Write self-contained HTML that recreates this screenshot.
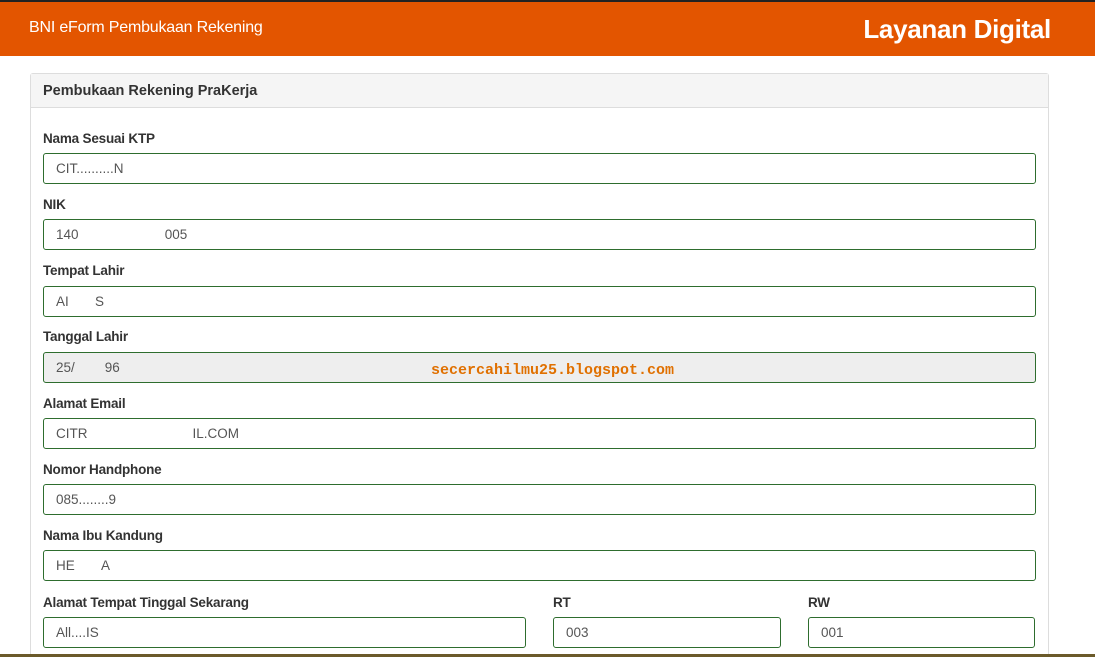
<!DOCTYPE html>
<html><head><style>
html,body{margin:0;width:1095px;height:657px;overflow:hidden}
body{background:#fff;font-family:"Liberation Sans",Arial,sans-serif;position:relative}
.hd{position:absolute;left:0;top:0;width:1095px;height:56px;background:#e35500;border-top:2px solid #222;box-sizing:border-box}
.t1{position:absolute;left:29px;top:17px;color:#fff;font-size:16px;letter-spacing:-0.2px}
.t2{position:absolute;right:44px;top:12px;color:#fff;font-size:26px;font-weight:bold;letter-spacing:-0.3px}
.pn{position:absolute;left:30px;top:73px;width:1019px;height:584px;border:1px solid #ddd;border-bottom:none;border-radius:3px;box-sizing:border-box}
.ph{height:34px;background:#f5f5f5;border-bottom:1px solid #ddd;font-weight:bold;font-size:14.5px;color:#333;padding:9px 12px;box-sizing:border-box}
.l{position:absolute;font-weight:bold;font-size:13.5px;color:#333;letter-spacing:-0.2px}
.i{position:absolute;height:31px;border:1px solid #2e6d2e;border-radius:3px;box-sizing:border-box;font-size:13.5px;color:#555;padding:7px 12px}
.wm{position:absolute;left:431px;top:362px;color:#e07000;font-family:"Liberation Mono",monospace;font-weight:bold;font-size:15px}
.bt{position:absolute;left:0;top:654px;width:1095px;height:3px;background:#6b5a2a}
</style></head><body>
<div class="hd"><div class="t1">BNI eForm Pembukaan Rekening</div><div class="t2">Layanan Digital</div></div>
<div class="pn"><div class="ph">Pembukaan Rekening PraKerja</div></div>
<div class="l" style="left:43px;top:131px">Nama Sesuai KTP</div>
<div class="i" style="left:43px;top:153px;width:993px">CIT..........N</div>
<div class="l" style="left:43px;top:197px">NIK</div>
<div class="i" style="left:43px;top:219px;width:993px">140&nbsp;&nbsp;&nbsp;&nbsp;&nbsp;&nbsp;&nbsp;&nbsp;&nbsp;&nbsp;&nbsp;&nbsp;&nbsp;&nbsp;&nbsp;&nbsp;&nbsp;&nbsp;&nbsp;&nbsp;&nbsp;&nbsp;&nbsp;005</div>
<div class="l" style="left:43px;top:263px">Tempat Lahir</div>
<div class="i" style="left:43px;top:286px;width:993px">AI&nbsp;&nbsp;&nbsp;&nbsp;&nbsp;&nbsp;&nbsp;S</div>
<div class="l" style="left:43px;top:329px">Tanggal Lahir</div>
<div class="i" style="left:43px;top:352px;width:993px;background:#eee">25/&nbsp;&nbsp;&nbsp;&nbsp;&nbsp;&nbsp;&nbsp;&nbsp;96</div>
<div class="wm">secercahilmu25.blogspot.com</div>
<div class="l" style="left:43px;top:396px">Alamat Email</div>
<div class="i" style="left:43px;top:418px;width:993px">CITR&nbsp;&nbsp;&nbsp;&nbsp;&nbsp;&nbsp;&nbsp;&nbsp;&nbsp;&nbsp;&nbsp;&nbsp;&nbsp;&nbsp;&nbsp;&nbsp;&nbsp;&nbsp;&nbsp;&nbsp;&nbsp;&nbsp;&nbsp;&nbsp;&nbsp;&nbsp;&nbsp;&nbsp;IL.COM</div>
<div class="l" style="left:43px;top:462px">Nomor Handphone</div>
<div class="i" style="left:43px;top:484px;width:993px">085........9</div>
<div class="l" style="left:43px;top:528px">Nama Ibu Kandung</div>
<div class="i" style="left:43px;top:550px;width:993px">HE&nbsp;&nbsp;&nbsp;&nbsp;&nbsp;&nbsp;&nbsp;A</div>
<div class="l" style="left:43px;top:595px">Alamat Tempat Tinggal Sekarang</div>
<div class="i" style="left:43px;top:617px;width:483px">All....IS</div>
<div class="l" style="left:553px;top:595px">RT</div>
<div class="i" style="left:553px;top:617px;width:228px">003</div>
<div class="l" style="left:808px;top:595px">RW</div>
<div class="i" style="left:808px;top:617px;width:227px">001</div>
<div class="bt"></div>
</body></html>
